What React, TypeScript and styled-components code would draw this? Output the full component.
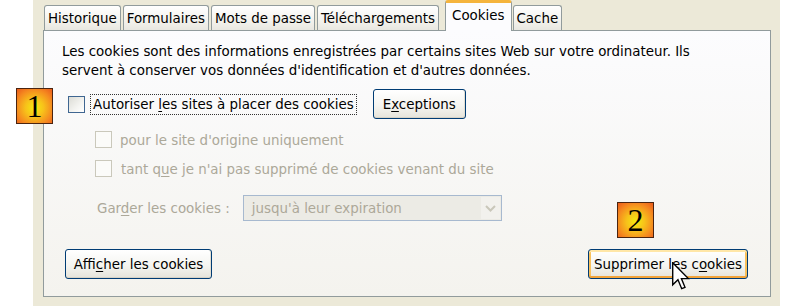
import React from "react";
import styled, { createGlobalStyle, css } from "styled-components";

const Global = createGlobalStyle`
  html, body { margin: 0; padding: 0; background: #ffffff; }
  body {
    width: 792px; height: 306px; overflow: hidden;
    font-family: "DejaVu Sans Condensed", "DejaVu Sans", sans-serif;
    font-size: 14.9px; color: #000;
  }
`;

const Page = styled.div`
  position: relative;
  width: 792px;
  height: 306px;
  display: flex;
`;

const Dialog = styled.div`
  margin-left: 33px;
  width: 747px;
  height: 306px;
  background: #ece9d8;
  display: flex;
  flex-direction: column;
  padding: 0 9px 9px 10px;
  box-sizing: border-box;
`;

const TabStrip = styled.div`
  height: 30px;
  display: flex;
  align-items: flex-end;
  gap: 2px;
  padding-left: 1px;
`;

const Tab = styled.div<{ $active?: boolean }>`
  height: 25px;
  padding: 0 3px;
  box-sizing: border-box;
  border: 1px solid #919b9c;
  border-bottom: none;
  border-radius: 3px 3px 0 0;
  background: linear-gradient(#ffffff, #f1f0ea 70%, #e8e7e0);
  display: flex;
  align-items: center;
  white-space: nowrap;
  ${(p) =>
    p.$active &&
    css`
      height: 31px;
      margin-bottom: -1px;
      margin-left: 4px;
      margin-right: -1px;
      padding: 0 6px 4px;
      border-top: 3px solid #f5b43c;
      background: #fcfcfe;
      position: relative;
      z-index: 1;
    `}
`;

const Panel = styled.div`
  flex: 1;
  border: 1px solid #919b9c;
  background: linear-gradient(#fcfcfe, #f4f3ee);
  padding: 11px 0 0 18px;
  display: flex;
  flex-direction: column;
`;

const Description = styled.p`
  margin: 0;
  line-height: 19px;
`;

const Row = styled.div<{ $top: number; $indent: number; $h?: number }>`
  display: flex;
  align-items: center;
  margin-top: ${(p) => p.$top}px;
  padding-left: ${(p) => p.$indent}px;
  height: ${(p) => p.$h ?? 17}px;
`;

const Box = styled.span<{ $disabled?: boolean }>`
  width: 17px;
  height: 17px;
  box-sizing: border-box;
  flex: none;
  border: 1px solid ${(p) => (p.$disabled ? "#cac8bb" : "#3f6691")};
  background: ${(p) =>
    p.$disabled ? "#fbfbf9" : "linear-gradient(135deg, #dcdcd6, #f4f4f1 60%, #ffffff)"};
`;

const FocusLabel = styled.span`
  margin-left: 5px;
  padding: 0 2px;
  height: 21px;
  line-height: 19px;
  box-sizing: border-box;
  border: 1px dotted #333;
  white-space: nowrap;
`;

const Label = styled.span<{ $disabled?: boolean; $gap: number }>`
  margin-left: ${(p) => p.$gap}px;
  color: ${(p) => (p.$disabled ? "#aca899" : "#000")};
  white-space: nowrap;
`;

const Key = styled.span`
  text-decoration: underline;
  text-underline-offset: 2px;
`;

const Button = styled.button<{ $w: number; $hover?: boolean; $ml?: number }>`
  font: inherit;
  color: #000;
  width: ${(p) => p.$w}px;
  height: 30px;
  margin-left: ${(p) => (p.$ml === undefined ? 0 : p.$ml)}px;
  padding: 0;
  border: 1px solid #003c74;
  border-radius: 3px;
  background: linear-gradient(#ffffff, #f5f5f1 55%, #e6e4da);
  box-shadow: inset 0 -1px 0 #d8d3c6, inset -1px 0 0 #e2ded2;
  white-space: nowrap;
  ${(p) =>
    p.$hover &&
    css`
      margin-left: auto;
      box-shadow: inset 0 2px 0 #ffe7a8, inset 0 -2px 0 #f2a43a,
        inset 2px 0 0 #f9c15c, inset -2px 0 0 #f9c15c;
    `}
`;

const Select = styled.div`
  margin-left: 13px;
  width: 259px;
  height: 26px;
  box-sizing: border-box;
  border: 1px solid #a7b9cf;
  background: #ecebe5;
  display: flex;
  align-items: center;
  color: #aca899;
`;

const SelectText = styled.span`
  flex: 1;
  padding-left: 8px;
  white-space: nowrap;
`;

const SelectArrow = styled.span`
  width: 19px;
  height: 22px;
  margin-right: 1px;
  background: #f2f1ed;
  display: flex;
  align-items: center;
  justify-content: center;
`;

const ButtonRow = styled.div`
  display: flex;
  align-items: center;
  margin-top: 28px;
  padding-left: 3px;
  padding-right: 22px;
`;

const Badge = styled.div<{ $x: number; $y: number }>`
  position: absolute;
  left: ${(p) => p.$x}px;
  top: ${(p) => p.$y}px;
  width: 37px;
  height: 36px;
  box-sizing: border-box;
  border: 1px solid #4a2410;
  background: radial-gradient(circle at 50% 55%, #f4ea10 0%, #f7c21a 35%, #f58a1f 70%, #ea5a1c 100%);
  display: flex;
  align-items: center;
  justify-content: center;
  font-family: "Liberation Serif", serif;
  font-size: 32px;
  line-height: 1;
  color: #000;
`;

const Cursor = styled.svg`
  position: absolute;
  left: 672px;
  top: 262px;
`;

export default function App() {
  const tabs = ["Historique", "Formulaires", "Mots de passe", "Téléchargements", "Cookies", "Cache"];
  return (
    <Page>
      <Global />
      <Dialog>
        <TabStrip>
          {tabs.map((t) => (
            <Tab key={t} $active={t === "Cookies"}>
              {t}
            </Tab>
          ))}
        </TabStrip>
        <Panel>
          <Description>
            Les cookies sont des informations enregistrées par certains sites Web sur votre ordinateur. Ils
            <br />
            servent à conserver vos données d'identification et d'autres données.
          </Description>
          <Row $top={9} $indent={6} $h={30}>
            <Box />
            <FocusLabel>
              Autoriser <Key>l</Key>es sites à placer des cookies
            </FocusLabel>
            <Button $w={93} $ml={16}>
              E<Key>x</Key>ceptions
            </Button>
          </Row>
          <Row $top={12} $indent={33}>
            <Box $disabled />
            <Label $disabled $gap={8}>
              pour le site d'origine uniquement
            </Label>
          </Row>
          <Row $top={12} $indent={33}>
            <Box $disabled />
            <Label $disabled $gap={9}>
              tant q<Key>u</Key>e je n'ai pas supprimé de cookies venant du site
            </Label>
          </Row>
          <Row $top={18} $indent={35} $h={26}>
            <Label $disabled $gap={0}>
              Gar<Key>d</Key>er les cookies :
            </Label>
            <Select>
              <SelectText>jusqu'à leur expiration</SelectText>
              <SelectArrow>
                <svg width="11" height="7" viewBox="0 0 11 7">
                  <path d="M1 1 L5.5 5.5 L10 1" fill="none" stroke="#c9c7ba" strokeWidth="2" />
                </svg>
              </SelectArrow>
            </Select>
          </Row>
          <ButtonRow>
            <Button $w={147}>
              Affi<Key>c</Key>her les cookies
            </Button>
            <Button $w={160} $hover>
              Supprimer les c<Key>o</Key>okies
            </Button>
          </ButtonRow>
        </Panel>
      </Dialog>
      <Badge $x={16} $y={88}>1</Badge>
      <Badge $x={617} $y={202}>2</Badge>
      <Cursor width="18" height="29" viewBox="0 0 13 21">
        <path
          d="M0.5 0.5 L0.5 16.5 L4.3 12.8 L7 19.3 L9.4 18.3 L6.8 12 L11.8 12 Z"
          fill="#fff"
          stroke="#000"
          strokeWidth="1"
          strokeLinejoin="miter"
        />
      </Cursor>
    </Page>
  );
}
